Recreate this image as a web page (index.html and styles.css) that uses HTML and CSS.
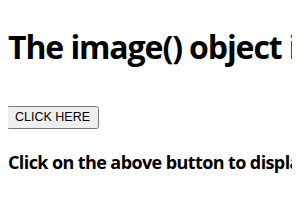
FILE: index.html
```html
<!DOCTYPE html>
<html lang="en">
<head>
    <meta charset="UTF-8">
    <meta name="viewport" content="width=device-width, initial-scale=1.0">
    <title>image() object</title>
    <link rel="stylesheet" href="styles.css">
</head>
<body>
    <h1>The image() object in JavaScript</h1>
    <button class="btn">CLICK HERE</button>
    <h3 class="sample">Click on the above button to display the image</h3>
</body>
</html>
```

FILE: styles.css
```css
body {
    margin: 8px;
    font-family: "Open Sans", "Noto Sans", sans-serif;
    white-space: nowrap;
    overflow: hidden;
}
h1 {
    font-size: 32px;
    letter-spacing: -1.1px;
    margin: 17px 0 36px;
}
.btn {
    font-family: "Liberation Sans", Arial, sans-serif;
    font-size: 12.5px;
    margin-left: -2px;
    padding: 2px 7px 3px;
}
h3 {
    font-size: 18px;
    letter-spacing: -0.6px;
    margin: 21px 0;
}
```
